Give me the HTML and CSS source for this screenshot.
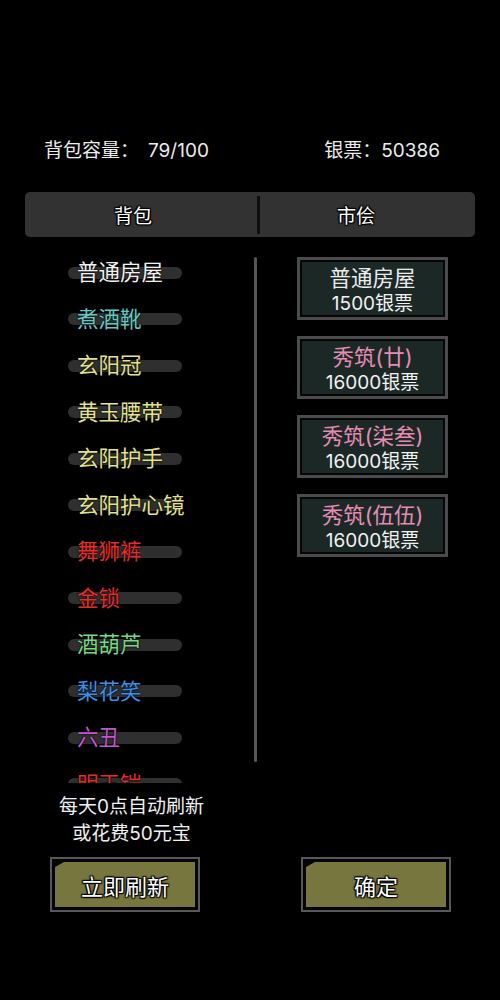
FILE: index.html
```html
<!DOCTYPE html>
<html lang="zh-CN">
<head>
  <meta charset="UTF-8" />
  <meta name="viewport" content="width=device-width, initial-scale=1.0" />
  <title>市侩</title>
  <link rel="stylesheet" href="styles.css">
</head>
<body>
  <div class="page">
    <div class="stats">
      <span>背包容量：<span class="num">79/100</span></span>
      <span>银票：50386</span>
    </div>

    <div class="tabs">
      <div class="tab tab-bag">背包</div>
      <div class="tab-sep"></div>
      <div class="tab tab-shop">市侩</div>
    </div>

    <div class="main">
      <div class="bag">
        <div class="list">
          <div class="item"><span class="bar"></span><span class="name c-white">普通房屋</span></div>
          <div class="item"><span class="bar"></span><span class="name c-cyan">煮酒靴</span></div>
          <div class="item"><span class="bar"></span><span class="name c-yellow">玄阳冠</span></div>
          <div class="item"><span class="bar"></span><span class="name c-yellow">黄玉腰带</span></div>
          <div class="item"><span class="bar"></span><span class="name c-yellow">玄阳护手</span></div>
          <div class="item"><span class="bar"></span><span class="name c-yellow">玄阳护心镜</span></div>
          <div class="item"><span class="bar"></span><span class="name c-red">舞狮裤</span></div>
          <div class="item"><span class="bar"></span><span class="name c-red">金锁</span></div>
          <div class="item"><span class="bar"></span><span class="name c-green">酒葫芦</span></div>
          <div class="item"><span class="bar"></span><span class="name c-blue">梨花笑</span></div>
          <div class="item"><span class="bar"></span><span class="name c-purple">六丑</span></div>
          <div class="item"><span class="bar"></span><span class="name c-red">明王铠</span></div>
        </div>
        <div class="scrollbar"></div>
      </div>

      <div class="shop">
        <div class="card">
          <div class="card-title">普通房屋</div>
          <div class="card-price">1500银票</div>
        </div>
        <div class="card">
          <div class="card-title c-pink">秀筑(廿)</div>
          <div class="card-price">16000银票</div>
        </div>
        <div class="card">
          <div class="card-title c-pink">秀筑(柒叁)</div>
          <div class="card-price">16000银票</div>
        </div>
        <div class="card">
          <div class="card-title c-pink">秀筑(伍伍)</div>
          <div class="card-price">16000银票</div>
        </div>
      </div>
    </div>

    <div class="notice">
      每天0点自动刷新<br>
      或花费50元宝
    </div>

    <div class="actions">
      <button class="btn"><span class="btn-fill">立即刷新</span></button>
      <button class="btn"><span class="btn-fill">确定</span></button>
    </div>
  </div>
</body>
</html>
```

FILE: styles.css
```css
body {
  margin: 0;
  background-color: #000;
  font-family: "Inter", "Noto Sans CJK SC", sans-serif;
  color: #ececec;
}

.page {
  width: 500px;
  height: 1000px;
  overflow: hidden;
}

/* cabeçalho */
.stats {
  display: flex;
  justify-content: space-between;
  padding: 139px 60px 0 44px;
  font-size: 19px;
  line-height: 24px;
}

.stats .num {
  margin-left: 9px;
}

.tabs {
  display: flex;
  align-items: center;
  height: 45px;
  margin: 29px 25px 0;
  background-color: #323232;
  border-radius: 5px;
}

.tab {
  text-align: center;
  font-size: 19px;
  color: #fff;
  text-shadow: 0 0 2px #000, 1px 1px 1px #000, -1px -1px 1px #000, 1px -1px 1px #000, -1px 1px 1px #000;
}

.tab-bag {
  flex: 0 0 232px;
  box-sizing: border-box;
  padding-right: 16px;
}

.tab-shop {
  flex: 1;
  padding-right: 23px;
}

.tab-sep {
  width: 3px;
  height: 38px;
  background-color: #0e0e0e;
}

/* conteúdo */
.main {
  display: flex;
  height: 536px;
  margin-top: 12px;
}

.bag {
  display: flex;
  align-items: flex-start;
}

.list {
  width: 186px;
  height: 534px;
  padding-left: 68px;
  overflow: hidden;
}

.item {
  display: grid;
  align-items: center;
  height: 46.5px;
}

.bar,
.name {
  grid-area: 1 / 1;
}

.bar {
  width: 114px;
  height: 12px;
  margin-top: 1px;
  background-color: #2f2f2f;
  border-radius: 6px;
}

.name {
  margin-left: 9px;
  font-size: 21.5px;
  line-height: 28px;
  white-space: nowrap;
  text-shadow: 0 0 2px #000, 0 0 1px #000;
}

.scrollbar {
  width: 3px;
  height: 505px;
  margin-top: 8px;
  background-color: #555;
  border-radius: 2px;
}

.c-white { color: #f2f2f2; }
.c-cyan { color: #62c9c4; }
.c-yellow { color: #e3e38f; }
.c-red { color: #e52b2b; }
.c-green { color: #78d784; }
.c-blue { color: #3d8fe6; }
.c-purple { color: #c454d2; }
.c-pink { color: #e68cb4; }

.shop {
  display: flex;
  flex-direction: column;
  gap: 16px;
  margin-left: 40px;
  padding-top: 8px;
}

.card {
  box-sizing: border-box;
  width: 151px;
  height: 63px;
  padding-top: 5px;
  border: 3px solid #4b4b4b;
  background-color: #1b2826;
  box-shadow: inset 0 0 0 2px #060606;
  text-align: center;
}

.card-title {
  font-size: 21.5px;
  line-height: 26px;
}

.card-price {
  font-size: 19px;
  line-height: 26px;
  color: #f2f2f2;
}

/* rodapé */
.notice {
  width: 263px;
  margin-top: 8px;
  font-size: 19px;
  line-height: 27px;
  text-align: center;
  color: #f0f0f0;
}

.actions {
  display: flex;
  gap: 101px;
  margin-top: 10px;
  padding-left: 50px;
}

.btn {
  box-sizing: border-box;
  width: 150px;
  height: 55px;
  padding: 3px;
  border: 2px solid #585858;
  background-color: #050505;
  cursor: pointer;
}

.btn-fill {
  display: flex;
  align-items: center;
  justify-content: center;
  height: 100%;
  background-color: #77763e;
  clip-path: polygon(9px 0, 100% 0, 100% 100%, 0 100%, 0 5px);
  font-family: "Inter", "Noto Sans CJK SC", sans-serif;
  font-size: 22px;
  color: #fff;
  text-shadow: 0 0 2px #000, 1px 1px 1px #000, -1px -1px 1px #000, 1px -1px 1px #000, -1px 1px 1px #000;
}
```
